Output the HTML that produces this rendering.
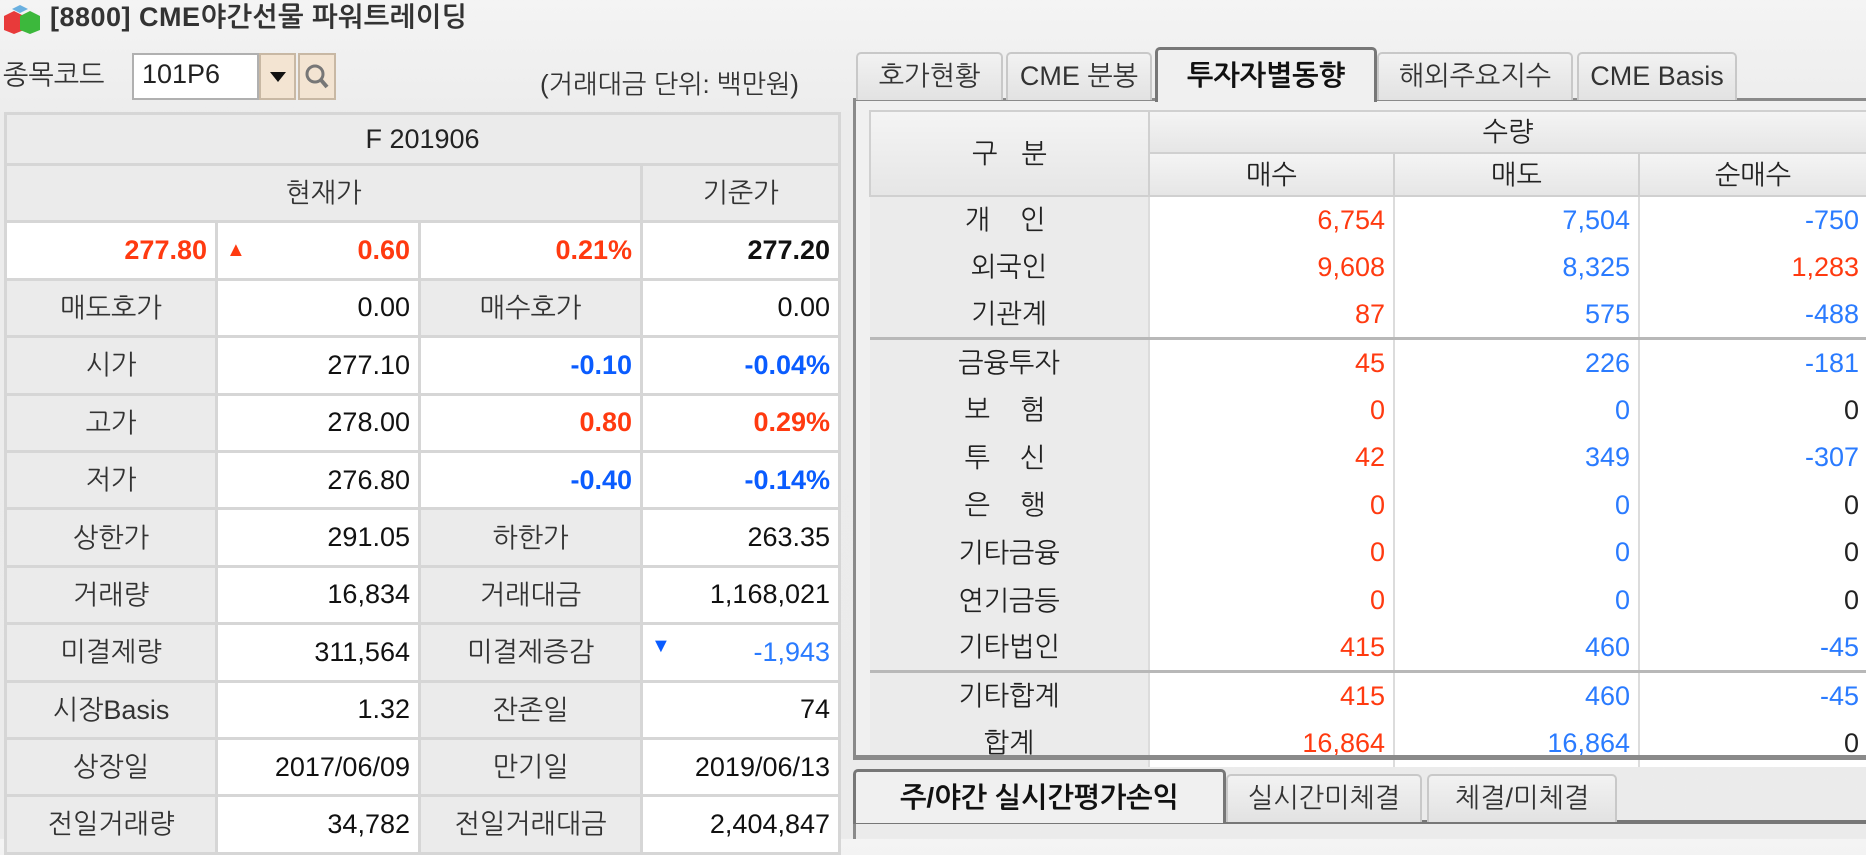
<!DOCTYPE html>
<html><head><meta charset="utf-8"><style>
*{box-sizing:border-box;margin:0;padding:0}
body{width:1866px;height:839px;overflow:hidden;background:linear-gradient(#f4f4f4,#ececec 120px,#ebebeb);font-family:"Liberation Sans","NanumGothic","Noto Sans CJK KR",sans-serif;color:#222;position:relative}
.a{position:absolute}
.title{left:50px;top:2px;font-size:27px;font-weight:bold;color:#333;letter-spacing:0.5px}
table{border-collapse:collapse;table-layout:fixed}
#lt{position:absolute;left:4px;top:112px;width:834px}
#lt td{border:3px solid #d6d6d6;font-size:27px;height:57.4px;padding:0 8px;white-space:nowrap}
#lt td.l{background:#ebebeb;text-align:center;color:#333}
#lt td.v{background:#fff;text-align:right;color:#111}
#lt td.r,.r{color:#ff3a10}
#lt td.b,.b{color:#0a5cff}
#lt td.bb,.bb{color:#2a7bff}
.bd{font-weight:bold}
.tab{position:absolute;top:52px;height:48px;background:linear-gradient(#f2f2f2,#e2e2e2);border:2px solid #c8c8c8;border-bottom:none;border-radius:5px 5px 0 0;font-size:27px;color:#333;text-align:center;line-height:44px;white-space:nowrap}
#rt{position:absolute;left:869px;top:110px;width:997px}
#rt td{font-size:27px;height:47.6px;padding:0 8px;white-space:nowrap;text-align:right;background:#fff;border-left:2px solid #dcdcdc}
#rt td.l{background:#ebebeb;text-align:center;color:#222;border-left:none}
#rt td.r{color:#ff3a10}
#rt td.bb{color:#2a7bff}
#rt tr.sep td{border-top:3px solid #b8b8b8}
#rt th{font-weight:normal;font-size:27px;background:linear-gradient(#f4f4f4,#e6e6e6);border:2px solid #d0d0d0;color:#222}
</style></head><body>
<svg class="a" style="left:2px;top:4px" width="40" height="30" viewBox="0 0 40 30">
<polygon points="2,12 12,7 22,12 22,26 12,30 2,26" fill="#e83a3a"/>
<polygon points="18,12 28,7 38,12 38,26 28,30 18,26" fill="#3cb83c"/>
<polygon points="10,5 18,1 26,5 18,9" fill="#6ab0e0"/>
</svg>
<div class="a title">[8800] CME야간선물 파워트레이딩</div>
<div class="a" style="left:3px;top:58px;font-size:27px;color:#333">종목코드</div>
<div class="a" style="left:132px;top:53px;width:127px;height:47px;background:#fff;border:2px solid #b0b0b0;font-size:27px;padding:4px 8px">101P6</div>
<div class="a" style="left:259px;top:53px;width:37px;height:47px;background:#f3e4d2;border:2px solid #c8b8a4"><div style="margin:17px auto 0;width:0;height:0;border-left:8px solid transparent;border-right:8px solid transparent;border-top:10px solid #111"></div></div>
<div class="a" style="left:298px;top:53px;width:38px;height:47px;background:#f3e4d2;border:2px solid #c8b8a4"><svg width="34" height="43"><circle cx="15" cy="19" r="8" fill="none" stroke="#777" stroke-width="3"/><line x1="21" y1="25" x2="27" y2="32" stroke="#777" stroke-width="4"/></svg></div>
<div class="a" style="left:540px;top:68px;font-size:26px;color:#333">(거래대금 단위: 백만원)</div>
<table id="lt">
<col style="width:211px"><col style="width:203px"><col style="width:222px"><col style="width:198px">
<tr><td class="l" colspan="4" style="height:51px;color:#222">F 201906</td></tr>
<tr><td class="l" colspan="3" style="height:55px">현재가</td><td class="l">기준가</td></tr>
<tr><td class="v r bd">277.80</td><td class="v r bd" style="position:relative"><span style="position:absolute;left:8px;font-size:20px;top:16px">▲</span>0.60</td><td class="v r bd">0.21%</td><td class="v bd">277.20</td></tr>
<tr><td class="l">매도호가</td><td class="v">0.00</td><td class="l">매수호가</td><td class="v">0.00</td></tr>
<tr><td class="l">시가</td><td class="v">277.10</td><td class="v b bd">-0.10</td><td class="v b bd">-0.04%</td></tr>
<tr><td class="l">고가</td><td class="v">278.00</td><td class="v r bd">0.80</td><td class="v r bd">0.29%</td></tr>
<tr><td class="l">저가</td><td class="v">276.80</td><td class="v b bd">-0.40</td><td class="v b bd">-0.14%</td></tr>
<tr><td class="l">상한가</td><td class="v">291.05</td><td class="l">하한가</td><td class="v">263.35</td></tr>
<tr><td class="l">거래량</td><td class="v">16,834</td><td class="l">거래대금</td><td class="v">1,168,021</td></tr>
<tr><td class="l">미결제량</td><td class="v">311,564</td><td class="l">미결제증감</td><td class="v bb" style="position:relative"><span style="position:absolute;left:8px;top:10px;font-size:20px;color:#0a5cff">▼</span>-1,943</td></tr>
<tr><td class="l">시장Basis</td><td class="v">1.32</td><td class="l">잔존일</td><td class="v">74</td></tr>
<tr><td class="l">상장일</td><td class="v">2017/06/09</td><td class="l">만기일</td><td class="v">2019/06/13</td></tr>
<tr><td class="l">전일거래량</td><td class="v">34,782</td><td class="l">전일거래대금</td><td class="v">2,404,847</td></tr>
</table>
<div class="a" style="left:853px;top:98px;width:1020px;height:662px;border:3px solid #8a8a8a;border-right:none;background:#f0f0f0"></div>
<div class="tab" style="left:856px;width:147px">호가현황</div>
<div class="tab" style="left:1006px;width:146px">CME 분봉</div>
<div class="tab" style="left:1155px;width:222px;top:47px;height:55px;border:3px solid #777;border-bottom:none;background:#f0f0f0;font-weight:bold;color:#111;line-height:52px;font-size:28px">투자자별동향</div>
<div class="tab" style="left:1377px;width:196px">해외주요지수</div>
<div class="tab" style="left:1577px;width:160px">CME Basis</div>
<table id="rt">
<col style="width:279px"><col style="width:245px"><col style="width:245px"><col style="width:228px">
<tr><th rowspan="2" style="height:85px;letter-spacing:24px;padding-left:24px">구분</th><th colspan="3" style="height:42px">수량</th></tr>
<tr><th style="height:43px">매수</th><th>매도</th><th>순매수</th></tr>
<tr><td class="l" style="letter-spacing:30px;padding-left:30px">개인</td><td class="r">6,754</td><td class="bb">7,504</td><td class="bb">-750</td></tr>
<tr><td class="l">외국인</td><td class="r">9,608</td><td class="bb">8,325</td><td class="r">1,283</td></tr>
<tr><td class="l">기관계</td><td class="r">87</td><td class="bb">575</td><td class="bb">-488</td></tr>
<tr class="sep"><td class="l">금융투자</td><td class="r">45</td><td class="bb">226</td><td class="bb">-181</td></tr>
<tr><td class="l" style="letter-spacing:30px;padding-left:30px">보험</td><td class="r">0</td><td class="bb">0</td><td>0</td></tr>
<tr><td class="l" style="letter-spacing:30px;padding-left:30px">투신</td><td class="r">42</td><td class="bb">349</td><td class="bb">-307</td></tr>
<tr><td class="l" style="letter-spacing:30px;padding-left:30px">은행</td><td class="r">0</td><td class="bb">0</td><td>0</td></tr>
<tr><td class="l">기타금융</td><td class="r">0</td><td class="bb">0</td><td>0</td></tr>
<tr><td class="l">연기금등</td><td class="r">0</td><td class="bb">0</td><td>0</td></tr>
<tr><td class="l">기타법인</td><td class="r">415</td><td class="bb">460</td><td class="bb">-45</td></tr>
<tr class="sep"><td class="l">기타합계</td><td class="r">415</td><td class="bb">460</td><td class="bb">-45</td></tr>
<tr><td class="l" style="height:40px">합계</td><td class="r">16,864</td><td class="bb">16,864</td><td>0</td></tr>
</table>
<div class="a" style="left:853px;top:755px;width:1013px;height:5px;background:#8a8a8a"></div>
<div class="a" style="left:853px;top:820px;width:1013px;height:4px;background:#777"></div>
<div class="tab" style="left:853px;width:373px;top:769px;height:54px;border:3px solid #777;border-bottom:none;background:#f0f0f0;font-weight:bold;color:#111;line-height:52px;font-size:28px">주/야간 실시간평가손익</div>
<div class="tab" style="left:1226px;width:196px;top:774px">실시간미체결</div>
<div class="tab" style="left:1427px;width:190px;top:774px">체결/미체결</div>
<div class="a" style="left:853px;top:824px;width:3px;height:15px;background:#8a8a8a"></div>
</body></html>
